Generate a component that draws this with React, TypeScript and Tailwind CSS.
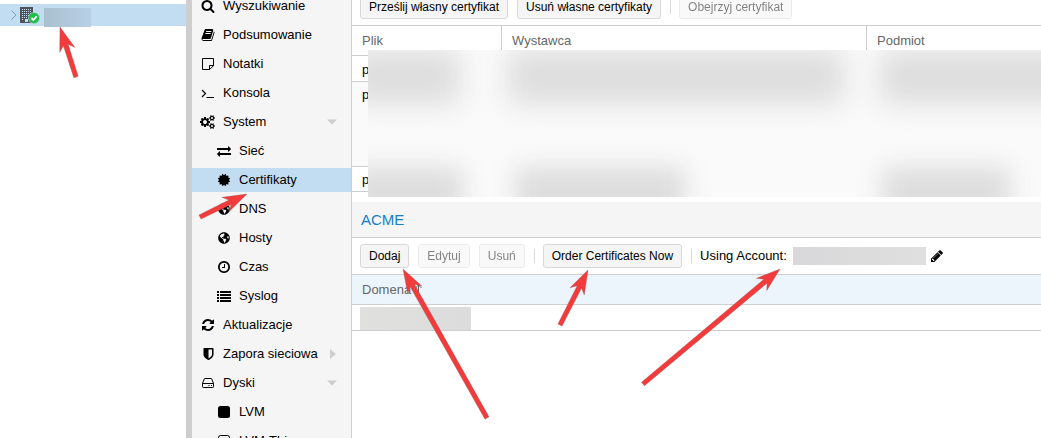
import type { ReactNode } from 'react';
import { FaCertificate, FaGlobeAmericas } from 'react-icons/fa';

type IconProps = { d: string; box?: string; className?: string };

function Glyph({ d, box = '0 0 1792 1792', className = 'size-3.5' }: IconProps) {
  return (
    <svg viewBox={box} className={className} fill="currentColor" aria-hidden="true">
      <path d={d} />
    </svg>
  );
}

const SEARCH =
  'M1216 832q0-185-131.5-316.5t-316.5-131.5-316.5 131.5-131.5 316.5 131.5 316.5 316.5 131.5 316.5-131.5 131.5-316.5zm512 832q0 52-38 90t-90 38q-54 0-90-38l-343-342q-179 124-399 124-143 0-273.5-55.5t-225-150-150-225-55.5-273.5 55.5-273.5 150-225 225-150 273.5-55.5 273.5 55.5 225 150 150 225 55.5 273.5q0 220-124 399l343 343q37 37 37 90z';
const BOOK =
  'M1703 478q40 57 18 129l-275 906q-19 64-76.5 107.5t-122.5 43.5h-923q-77 0-148.5-53.5t-99.5-131.5q-24-67-2-127 0-4 3-27t4-37q1-8-3-21.5t-3-19.5q2-11 8-21t16.5-23.5 16.5-23.5q23-38 45-91.5t30-91.5q3-10 .5-30t-.5-28q3-11 17-28t17-23q21-36 42-92t25-90q1-9-2.5-32t.5-28q4-13 22-30.5t22-22.5q19-26 42.5-84.5t27.5-96.5q1-8-3-25.5t-2-26.5q2-8 9-18t18-23 17-21q8-12 16.5-30.5t15-35 16-36 19.5-32 26.5-23.5 36-11.5 47.5 5.5l-1 3q38-9 51-9h761q74 0 114 56t18 130l-274 906q-36 119-71.5 153.5t-128.5 34.5h-869q-27 0-38 15-11 16-1 43 24 70 144 70h923q29 0 56-15.5t35-41.5l300-987q7-22 5-57 38 15 59 43zm-1064 2q-4 13 2 22.5t20 9.5h608q13 0 25.5-9.5t16.5-22.5l21-64q4-13-2-22.5t-20-9.5h-608q-13 0-25.5 9.5t-16.5 22.5zm-83 256q-4 13 2 22.5t20 9.5h608q13 0 25.5-9.5t16.5-22.5l21-64q4-13-2-22.5t-20-9.5h-608q-13 0-25.5 9.5t-16.5 22.5z';
const SMALL_COG =
  'v140q0 16-149 31-12 27-30 52 51 113 51 138 0 4-4 7-122 71-124 71-8 0-46-47t-52-68q-20 2-30 2t-30-2q-14 21-52 68t-46 47q-2 0-124-71-4-3-4-7 0-25 51-138-18-25-30-52-149-15-149-31v-140q0-16 149-31 13-29 30-52-51-113-51-138 0-4 4-7 4-2 35-20t59-34 30-16q8 0 46 46.5t52 67.5q20-2 30-2t30 2q51-71 92-112l6-2q4 0 124 70 4 3 4 7 0 25-51 138 17 23 30 52 149 15 149 31z';
const COGS =
  'M832 896q0-106-75-181t-181-75-181 75-75 181 75 181 181 75 181-75 75-181zm768 512q0-52-38-90t-90-38-90 38-38 90q0 53 37.5 90.5t90.5 37.5 90.5-37.5 37.5-90.5zm0-1024q0-52-38-90t-90-38-90 38-38 90q0 53 37.5 90.5t90.5 37.5 90.5-37.5 37.5-90.5zm-384 421v185q0 10-7 19.5t-16 10.5l-155 24q-11 35-32 76 34 48 90 115 7 11 7 20 0 12-7 19-23 30-82.5 89.5t-78.5 59.5q-11 0-21-7l-115-90q-37 19-77 31-11 108-23 155-7 24-30 24h-186q-11 0-20-7.5t-10-17.5l-23-153q-34-10-75-31l-118 89q-7 7-20 7-11 0-21-8-144-133-144-160 0-9 7-19 10-14 41-53t47-61q-23-44-35-82l-152-24q-10-1-17-9.5t-7-19.5v-185q0-10 7-19.5t16-10.5l155-24q11-35 32-76-34-48-90-115-7-11-7-20 0-12 7-20 22-30 82-89t79-59q11 0 21 7l115 90q34-18 77-32 11-108 23-154 7-24 30-24h186q11 0 20 7.5t10 17.5l23 153q34 10 75 31l118-89q8-7 20-7 11 0 21 8 144 133 144 160 0 8-7 19-12 16-42 54t-45 60q23 48 34 82l152 23q10 2 17 10.5t7 19.5z' +
  'M1856 1338' + SMALL_COG + 'M1856 314' + SMALL_COG;
const EXCHANGE =
  'M1792 1184v192q0 13-9.5 22.5t-22.5 9.5h-1376v192q0 13-9.5 22.5t-22.5 9.5q-12 0-24-10l-319-320q-9-9-9-22 0-14 9-23l320-320q9-9 23-9 13 0 22.5 9.5t9.5 22.5v192h1376q13 0 22.5 9.5t9.5 22.5zm0-544q0 14-9 23l-320 320q-9 9-23 9-13 0-22.5-9.5t-9.5-22.5v-192h-1376q-13 0-22.5-9.5t-9.5-22.5v-192q0-13 9.5-22.5t22.5-9.5h1376v-192q0-14 9-23t23-9q12 0 24 10l319 319q9 9 9 23z';
const CLOCK =
  'M1024 544v448q0 14-9 23t-23 9h-320q-14 0-23-9t-9-23v-64q0-14 9-23t23-9h224v-352q0-14 9-23t23-9h64q14 0 23 9t9 23zm416 352q0-148-73-273t-198-198-273-73-273 73-198 198-73 273 73 273 198 198 273 73 273-73 198-198 73-273zm224 0q0 209-103 385.5t-279.5 279.5-385.5 103-385.5-103-279.5-279.5-103-385.5 103-385.5 279.5-279.5 385.5-103 385.5 103 279.5 279.5 103 385.5z';
const REFRESH =
  'M1639 1056q0 5-1 7-64 268-268 434.5t-478 166.5q-146 0-282.5-55t-243.5-157l-129 129q-19 19-45 19t-45-19-19-45v-448q0-26 19-45t45-19h448q26 0 45 19t19 45-19 45l-137 137q71 66 161 102t187 36q134 0 250-65t186-179q11-17 53-117 8-23 30-23h192q13 0 22.5 9.5t9.5 22.5zm25-800v448q0 26-19 45t-45 19h-448q-26 0-45-19t-19-45 19-45l138-138q-148-137-349-137-134 0-250 65t-186 179q-11 17-53 117-8 23-30 23h-199q-13 0-22.5-9.5t-9.5-22.5v-7q65-268 270-434.5t480-166.5q146 0 284 55.5t245 156.5l130-129q19-19 45-19t45 19 19 45z';
const SHIELD =
  'M1408 960v-640h-448v1137q119-63 213-137 235-184 235-360zm192-768v768q0 86-33.5 170.5t-83 150-118 127.5-126.5 103-121 77.5-89.5 49.5-42.500 20q-12 6-26 6t-26-6q-16-7-42.5-20t-89.5-49.5-121-77.5-126.5-103-118-127.5-83-150-33.5-170.5v-768q0-26 19-45t45-19h1152q26 0 45 19t19 45z';
const PENCIL =
  'M491 1536l91-91-235-235-91 91v107h128v128h107zm523-928q0-22-22-22-10 0-17 7l-542 542q-7 7-7 17 0 22 22 22 10 0 17-7l542-542q7-7 7-17zm-54-192l416 416-832 832h-416v-416zm683 96q0 53-37 90l-166 166-416-416 166-165q36-38 90-38 53 0 91 38l235 234q37 39 37 91z';

const noteIcon = (
  <svg viewBox="0 0 14 14" className="size-3.5" fill="none" stroke="currentColor" aria-hidden="true">
    <path d="M1.5 1.5h11v7.2l-3.8 3.8H1.5z M8.5 12.5v-4h4" strokeLinejoin="round" />
  </svg>
);
const terminalIcon = (
  <svg viewBox="0 0 14 14" className="size-3.5" fill="none" stroke="currentColor" aria-hidden="true">
    <path d="M1 4l3.5 3.5L1 11" strokeWidth="1.2" />
    <path d="M5.5 11.5H13" />
  </svg>
);
const listIcon = (
  <svg viewBox="0 0 14 14" className="size-3.5" fill="currentColor" aria-hidden="true">
    <path d="M0 2h2v2H0zM3 2h11v2H3zM0 5h2v2H0zM3 5h11v2H3zM0 8h2v2H0zM3 8h11v2H3zM0 11h2v2H0zM3 11h11v2H3z" />
  </svg>
);
const driveIcon = (
  <svg viewBox="0 0 14 14" className="size-3.5" fill="none" stroke="currentColor" aria-hidden="true">
    <path d="M1.5 7.5L3.2 3q.2-.5.7-.5h6.2q.5 0 .7.5l1.7 4.5v3.2q0 .8-.8.8H2.3q-.8 0-.8-.8zM1.5 7.5h11" />
    <path d="M7.5 9.5h1M10 9.5h1" />
  </svg>
);
const filledSquare = (
  <svg viewBox="0 0 14 14" className="size-3.5" fill="currentColor" aria-hidden="true">
    <rect x="1" y="1" width="12" height="12" rx="2.5" />
  </svg>
);
const openSquare = (
  <svg viewBox="0 0 14 14" className="size-3.5" fill="none" stroke="currentColor" aria-hidden="true">
    <rect x="1.5" y="1.5" width="11" height="11" rx="2" />
  </svg>
);

type Item = { label: string; icon: ReactNode; child?: boolean; active?: boolean; mark?: 'down' | 'right' };

const items: Item[] = [
  { label: 'Wyszukiwanie', icon: <Glyph d={SEARCH} /> },
  { label: 'Podsumowanie', icon: <Glyph d={BOOK} /> },
  { label: 'Notatki', icon: noteIcon },
  { label: 'Konsola', icon: terminalIcon },
  { label: 'System', icon: <Glyph d={COGS} box="0 0 1920 1792" className="h-3.5 w-4" />, mark: 'down' },
  { label: 'Sieć', icon: <Glyph d={EXCHANGE} />, child: true },
  { label: 'Certifikaty', icon: <FaCertificate className="size-3" />, child: true, active: true },
  { label: 'DNS', icon: <FaGlobeAmericas className="size-3" />, child: true },
  { label: 'Hosty', icon: <FaGlobeAmericas className="size-3" />, child: true },
  { label: 'Czas', icon: <Glyph d={CLOCK} />, child: true },
  { label: 'Syslog', icon: listIcon, child: true },
  { label: 'Aktualizacje', icon: <Glyph d={REFRESH} /> },
  { label: 'Zapora sieciowa', icon: <Glyph d={SHIELD} />, mark: 'right' },
  { label: 'Dyski', icon: driveIcon, mark: 'down' },
  { label: 'LVM', icon: filledSquare, child: true },
  { label: 'LVM-Thin', icon: openSquare, child: true },
];

function NavItem({ label, icon, child, active, mark }: Item) {
  return (
    <li>
      <a
        href="#"
        aria-current={active ? 'page' : undefined}
        className={`flex h-6 items-center gap-[7px] pr-3.5 ${child ? 'pl-6' : 'pl-2'} ${active ? 'bg-[#c2ddf2]' : ''}`}
      >
        <span className="flex w-4 shrink-0 justify-center">{icon}</span>
        <span className="grow whitespace-nowrap">{label}</span>
        {mark && (
          <svg viewBox="0 0 10 10" className="size-2.5 shrink-0" fill="#cecece" aria-hidden="true">
            <path d={mark === 'down' ? 'M0 2.5h10L5 7.500z' : 'M3 0v10l6-5z'} />
          </svg>
        )}
      </a>
    </li>
  );
}

function ToolButton({ children, disabled }: { children: ReactNode; disabled?: boolean }) {
  return (
    <button
      type="button"
      disabled={disabled}
      className="h-6 shrink-0 rounded-[3px] border border-[#d8d8d8] bg-[#f5f5f5] px-2 text-xs whitespace-nowrap text-black disabled:opacity-50"
    >
      {children}
    </button>
  );
}

function Separator() {
  return <span className="-mr-px h-3.5 w-px shrink-0 bg-[#d8d8d8]" />;
}

function Smudges({ widths }: { widths: string[] }) {
  return (
    <>
      {widths.map((w, i) => (
        <span key={i} className={`h-full bg-[#dddddd] ${w}`} />
      ))}
    </>
  );
}

const arrows = [
  [76, 77, 60, 27],
  [200, 217, 247, 194],
  [487, 418, 403, 269],
  [560, 325, 588, 270],
  [643, 384, 780, 269],
];

function arrowPath([x1, y1, x2, y2]: number[]) {
  const len = Math.hypot(x2 - x1, y2 - y1);
  const ux = (x2 - x1) / len;
  const uy = (y2 - y1) / len;
  const at = (back: number, side: number) => `${x2 - ux * back - uy * side} ${y2 - uy * back + ux * side}`;
  return `M${at(0, 0)}L${at(24, 8)}L${at(19, 2.5)}L${at(len, 2.3)}L${at(len, -2.3)}L${at(19, -2.5)}L${at(24, -8)}Z`;
}

export default function App() {
  return (
    <div className="relative flex h-screen overflow-hidden bg-white font-['Liberation_Sans',Arial,sans-serif] text-[13px] leading-4 text-black">
      <aside className="w-[186px] shrink-0 pt-1">
        <div className="flex h-[22px] items-center bg-[#c2ddf2] pl-2.5">
          <svg viewBox="0 0 8 12" className="h-3 w-2" fill="none" stroke="#8f9aa3" aria-hidden="true">
            <path d="M1.5 1.5L6 6l-4.500 4.500" />
          </svg>
          <svg viewBox="0 0 22 18" className="ml-0.5 h-[18px] w-[22px] shrink-0" aria-hidden="true">
            <path d="M0 1h13v16H0z" fill="#505359" />
            <path
              d="M2 3h1v1H2zM4 3h1v1H4zM6 3h1v1H6zM8 3h1v1H8zM10 3h1v1h-1zM2 5h1v1H2zM4 5h1v1H4zM6 5h1v1H6zM8 5h1v1H8zM10 5h1v1h-1zM2 7h1v1H2zM4 7h1v1H4zM6 7h1v1H6zM8 7h1v1H8zM10 7h1v1h-1zM2 9h1v1H2zM4 9h1v1H4zM6 9h1v1H6zM8 9h1v1H8zM2 11h1v1H2zM4 11h1v1H4zM6 11h1v1H6zM2 13h1v1H2zM5 13h3v3H5z"
              fill="#c2ddf2"
            />
            <circle cx="14" cy="12" r="5.6" fill="#21bf4b" stroke="#c2ddf2" strokeWidth=".5" />
            <path d="M11.300 12l2 2 3.400-3.600" fill="none" stroke="#fff" strokeWidth="1.800" />
          </svg>
          <span className="mt-1 ml-0.5 h-[19px] w-[47px] bg-linear-to-r from-[#a9c0cf] to-[#b8d0e6]" />
        </div>
      </aside>
      <div className="w-1.5 shrink-0 bg-[#cecece]" />
      <nav className="w-40 shrink-0 border-r border-[#cecece] bg-[#f5f5f5]">
        <ul className="-mt-1.5 flex flex-col gap-[5px]">
          {items.map((item) => (
            <NavItem key={item.label} {...item} />
          ))}
        </ul>
      </nav>

      <main className="min-w-0 grow">
        <div className="-mt-[11px] flex h-9 items-center gap-[9px] px-2">
          <ToolButton>Prześlij własny certyfikat</ToolButton>
          <ToolButton>Usuń własne certyfikaty</ToolButton>
          <Separator />
          <ToolButton disabled>Obejrzyj certyfikat</ToolButton>
        </div>

        <div className="relative pb-2.5">
          <table className="w-full table-fixed border-separate border-spacing-0 text-left">
            <thead>
              <tr className="h-[31px] text-[#666]">
                <th className="w-[150px] border-y border-r border-[#cecece] px-2.5 py-0 font-normal">Plik</th>
                <th className="w-[365px] border-y border-r border-[#cecece] px-2.5 py-0 font-normal">Wystawca</th>
                <th className="border-y border-[#cecece] px-2.5 py-0 font-normal">Podmiot</th>
              </tr>
            </thead>
            <tbody>
              <tr className="h-[26px]">
                <td colSpan={3} className="border-b border-[#cecece] px-2.5 pt-0.5">p</td>
              </tr>
              <tr className="h-[85px]">
                <td colSpan={3} className="border-b border-[#cecece] bg-[#fafafa] px-2.5 pt-[5px] align-top">p</td>
              </tr>
              <tr className="h-[25px]">
                <td colSpan={3} className="border-b border-[#cecece] px-2.5 pt-0.5">p</td>
              </tr>
            </tbody>
          </table>
          <div className="absolute top-[25px] right-0 left-4 flex h-[147px] flex-col justify-between overflow-hidden bg-[#fafafa]">
            <div className="-ml-5 flex h-[54px] gap-[48px] blur-[14px]">
              <Smudges widths={['w-[112px] shrink-0', 'w-[336px] shrink-0', '-ml-3 -mr-10 grow']} />
            </div>
            <div className="-mb-5 -ml-5 flex h-[50px] gap-[52px] blur-[12px]">
              <Smudges widths={['w-[115px] shrink-0', 'w-[170px] shrink-0', 'ml-[145px] w-[128px] shrink-0']} />
            </div>
          </div>
        </div>

        <h2 className="flex h-9 items-center border-b border-[#cecece] bg-[#f5f5f5] px-[9px] text-[15px] text-[#157fcc]">
          ACME
        </h2>
        <div className="flex h-9 items-center gap-[9px] px-2">
          <ToolButton>Dodaj</ToolButton>
          <ToolButton disabled>Edytuj</ToolButton>
          <ToolButton disabled>Usuń</ToolButton>
          <Separator />
          <ToolButton>Order Certificates Now</ToolButton>
          <Separator />
          <div className="flex items-center gap-1.5">
            <span className="whitespace-nowrap">Using Account:</span>
            <span className="h-[18px] w-[133px] shrink-0 bg-linear-to-r from-[#d8d8da] to-[#dfdfdf]" />
            <button type="button" aria-label="Edit account" className="-ml-0.5 shrink-0">
              <Glyph d={PENCIL} />
            </button>
          </div>
        </div>
        <table className="w-full table-fixed border-separate border-spacing-0 text-left">
          <thead>
            <tr className="h-[31px] text-[#666]">
              <th aria-sort="ascending" className="border-y border-[#cecece] bg-[#edf5fc] px-2.5 py-0 font-normal">
                <span className="flex items-center gap-1">
                  Domena
                  <svg viewBox="0 0 8 12" className="h-3 w-2" fill="none" stroke="currentColor" aria-hidden="true">
                    <path d="M3.5 12V1M.5 4l3-3 3 3" />
                  </svg>
                </span>
              </th>
            </tr>
          </thead>
          <tbody>
            <tr>
              <td className="h-[26px] border-b border-[#cecece] px-2 pt-0.5 pb-0">
                <div className="h-[23px] w-[111px] bg-linear-to-r from-[#e0e0de] to-[#dcdcdc]" />
              </td>
            </tr>
          </tbody>
        </table>
      </main>

      <svg className="pointer-events-none absolute inset-0 h-full w-full" aria-hidden="true">
        {arrows.map((a) => (
          <path key={a.join()} d={arrowPath(a)} fill="#f43b3b" stroke="#8a5a5a" strokeOpacity=".6" strokeWidth=".6" />
        ))}
      </svg>
    </div>
  );
}
